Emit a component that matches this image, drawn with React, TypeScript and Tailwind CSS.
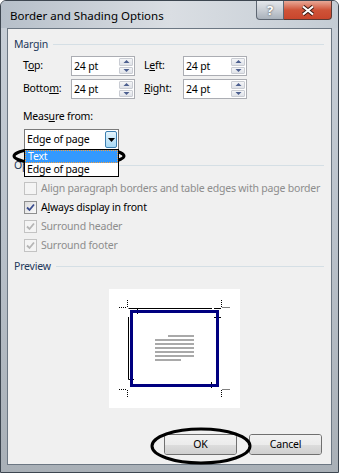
import type { ReactNode } from 'react';

const Tri = ({ up }: { up?: boolean }) => (
  <svg width="7" height="5" viewBox="0 0 7 5">
    {up ? <path d="M0.5 4 L3.5 1 L6.5 4 Z" fill="#4c5f8f" /> : <path d="M0.5 1 L3.5 4 L6.5 1 Z" fill="#4c5f8f" />}
  </svg>
);

const Spin = ({ value }: { value: string }) => (
  <div className="flex h-[20px] w-[64px] border border-[#abadb3] bg-white">
    <div className="flex-1 pl-[2px] leading-[18px] text-black">{value}</div>
    <div className="flex w-[16px] flex-col gap-px p-px">
      <div className="flex flex-1 items-center justify-center rounded-[1px] border border-[#c9ccd3] bg-gradient-to-b from-[#f4f5f7] to-[#dfe2e8]">
        <Tri up />
      </div>
      <div className="flex flex-1 items-center justify-center rounded-[1px] border border-[#c9ccd3] bg-gradient-to-b from-[#f4f5f7] to-[#dfe2e8]">
        <Tri />
      </div>
    </div>
  </div>
);

const GroupHead = ({ label }: { label: string }) => (
  <div className="flex h-[16px] items-center">
    <span className="leading-[16px] text-[#1e395b]">{label}</span>
    <div className="ml-[5px] h-px flex-1 bg-[#d5dfe5]" />
  </div>
);

const Check = ({ checked, disabled, children }: { checked?: boolean; disabled?: boolean; children: ReactNode }) => (
  <div className="flex h-[19px] items-center gap-[4px] whitespace-nowrap">
    <div
      className={
        disabled
          ? 'flex h-[13px] w-[13px] shrink-0 items-center justify-center border border-[#c3c3c3] bg-[#f4f4f4]'
          : 'flex h-[13px] w-[13px] shrink-0 items-center justify-center border border-[#8e8f8f] bg-gradient-to-br from-[#dcdcdc] to-[#fafafa]'
      }
    >
      {checked && (
        <svg width="9" height="9" viewBox="0 0 9 9">
          <path d="M1 4.5 L3.5 7 L8 1.5" fill="none" stroke={disabled ? '#b5b5b5' : '#3a4d8f'} strokeWidth="1.8" />
        </svg>
      )}
    </div>
    <span className={disabled ? 'text-[#8d8d8d]' : 'text-black'}>{children}</span>
  </div>
);

const Preview = () => (
  <svg width="131" height="119" viewBox="0 0 131 119" className="block bg-white">
    <g stroke="#000" strokeWidth="1" strokeDasharray="1 1" fill="none">
      <path d="M10 18.5 H18" />
      <path d="M18.5 11 V18" />
      <path d="M113.5 18.5 H121" />
      <path d="M112.5 11 V18" />
      <path d="M10 100.5 H18" />
      <path d="M18.5 101 V108" />
      <path d="M113.5 100.5 H121" />
      <path d="M112.5 101 V108" />
    </g>
    <g stroke="#000" strokeWidth="1" fill="none">
      <path d="M19.5 19.5 H103" />
      <path d="M105 19.5 H112" />
      <path d="M28.5 19.5 V25" />
      <path d="M19.5 28 V90.5 H25" />
      <path d="M105 28.5 H112" />
      <path d="M102.5 93 V99" />
    </g>
    <rect x="22.5" y="22.5" width="86" height="74" fill="none" stroke="#000080" strokeWidth="3" />
    <g fill="#a9a9a9">
      <rect x="59" y="46" width="26" height="2" />
      <rect x="46" y="50" width="39" height="2" />
      <rect x="46" y="54" width="39" height="2" />
      <rect x="46" y="58" width="39" height="2" />
      <rect x="46" y="62" width="39" height="2" />
      <rect x="46" y="66" width="39" height="2" />
      <rect x="46" y="70" width="26" height="2" />
    </g>
  </svg>
);

const Btn = ({ children }: { children: ReactNode }) => (
  <button className="relative h-[21px] w-[73px] overflow-hidden rounded-[3px] border border-[#707070] text-black">
    <div className="absolute inset-0 flex flex-col">
      <div className="flex-1 bg-gradient-to-b from-[#f2f2f2] to-[#ebebeb]" />
      <div className="flex-1 bg-gradient-to-b from-[#dddddd] to-[#cfcfcf]" />
    </div>
    <span className="relative">{children}</span>
  </button>
);

export default function App() {
  return (
    <div className="relative h-[473px] w-[339px] overflow-hidden rounded-t-[6px] border border-[#3d4650] bg-gradient-to-b from-[#c9d0d8] via-[#b9c1ca] to-[#a9b0b7] font-['Noto_Sans',sans-serif] text-[10.5px] tracking-[-0.2px] select-none">
      {/* title bar */}
      <div className="flex h-[27px] items-start bg-gradient-to-r from-[#b6bfc9] via-[#dadee3] to-[#c4ccd4]">
        <div className="pl-[9px] pt-[7px] text-[11.5px] leading-[16px] tracking-normal text-black">Border and Shading Options</div>
        <div className="ml-auto mr-[6px] flex">
          <div className="flex h-[19px] w-[28px] items-center justify-center rounded-bl-[4px] border border-t-0 border-[#5d6672] bg-gradient-to-b from-[#e4e7eb] via-[#c9ced5] to-[#a9b1bb] text-[13px] font-bold leading-none text-white [text-shadow:0_0_2px_#333]">
            ?
          </div>
          <div className="flex h-[19px] w-[48px] items-center justify-center rounded-br-[4px] border border-l-0 border-t-0 border-[#5d3a34] bg-gradient-to-b from-[#e8a897] via-[#cf5338] to-[#c9462c]">
            <svg width="14" height="11" viewBox="0 0 14 11">
              <path d="M2 1.5 L12 9.5 M12 1.5 L2 9.5" stroke="#3a1a12" strokeWidth="4" />
              <path d="M2 1.5 L12 9.5 M12 1.5 L2 9.5" stroke="#fff" strokeWidth="2.2" />
            </svg>
          </div>
        </div>
      </div>

      {/* client area */}
      <div className="ml-[6px] mr-[6px] h-[437px] border border-[#6c7783] bg-[#f0f0f0] pl-[6px] pr-[7px] text-black">
        <div className="pt-[7px]">
          <GroupHead label="Margin" />
        </div>
        <div className="mt-[4px] flex flex-col gap-[3px] pl-[9px]">
          <div className="flex h-[20px] items-center">
            <span className="w-[48px]">
              T<u>o</u>p:
            </span>
            <Spin value="24 pt" />
            <span className="ml-[9px] w-[39px]">
              L<u>e</u>ft:
            </span>
            <Spin value="24 pt" />
          </div>
          <div className="flex h-[20px] items-center">
            <span className="w-[48px]">
              Botto<u>m</u>:
            </span>
            <Spin value="24 pt" />
            <span className="ml-[9px] w-[39px]">
              <u>R</u>ight:
            </span>
            <Spin value="24 pt" />
          </div>
          <div className="mt-[6px] leading-[16px]">
            Meas<u>u</u>re from:
          </div>
          <div className="relative z-10 ml-[1px] mt-[2px] w-[95px]">
            <div className="flex h-[21px] items-center border border-[#7a7a7a] bg-white pl-[2px] pr-px">
              <span className="flex-1">Edge of page</span>
              <div className="flex h-[17px] w-[12px] items-center justify-center rounded-[2px] border border-[#3c7fb1] bg-gradient-to-b from-[#e5f4fc] to-[#a7d9f5]">
                <svg width="7" height="4" viewBox="0 0 7 4">
                  <path d="M0 0 H7 L3.5 4 Z" fill="#000" />
                </svg>
              </div>
            </div>
            <div className="absolute left-0 top-[20px] w-[95px] border border-black bg-white">
              <div className="h-[13px] border border-dotted border-[#f5a040] bg-[#3399ff] pl-[2px] leading-[11px] text-white">Text</div>
              <div className="h-[13px] pl-[2px] leading-[13px]">Edge of page</div>
            </div>
          </div>
        </div>

        <div className="mt-[7px]">
          <GroupHead label="Options" />
        </div>
        <div className="mt-[6px] flex flex-col pl-[10px]">
          <Check disabled>Align paragraph borders and table edges with page border</Check>
          <Check checked>
            A<u>l</u>ways display in front
          </Check>
          <Check checked disabled>
            Surround header
          </Check>
          <Check checked disabled>
            Surround footer
          </Check>
        </div>

        <div className="mt-[3px]">
          <GroupHead label="Preview" />
        </div>
        <div className="ml-[95px] mt-[15px]">
          <Preview />
        </div>

        <div className="mr-[2px] mt-[26px] flex justify-end gap-[12px]">
          <Btn>OK</Btn>
          <Btn>Cancel</Btn>
        </div>
      </div>

      {/* hand-drawn annotation ellipses */}
      <svg className="pointer-events-none absolute left-[-1px] top-[-1px]" width="339" height="473" viewBox="0 0 339 473">
        <ellipse cx="69" cy="156" rx="55" ry="9.5" fill="none" stroke="#000" strokeWidth="3" />
        <ellipse cx="201" cy="446" rx="49" ry="17" fill="none" stroke="#000" strokeWidth="3" />
      </svg>
    </div>
  );
}
